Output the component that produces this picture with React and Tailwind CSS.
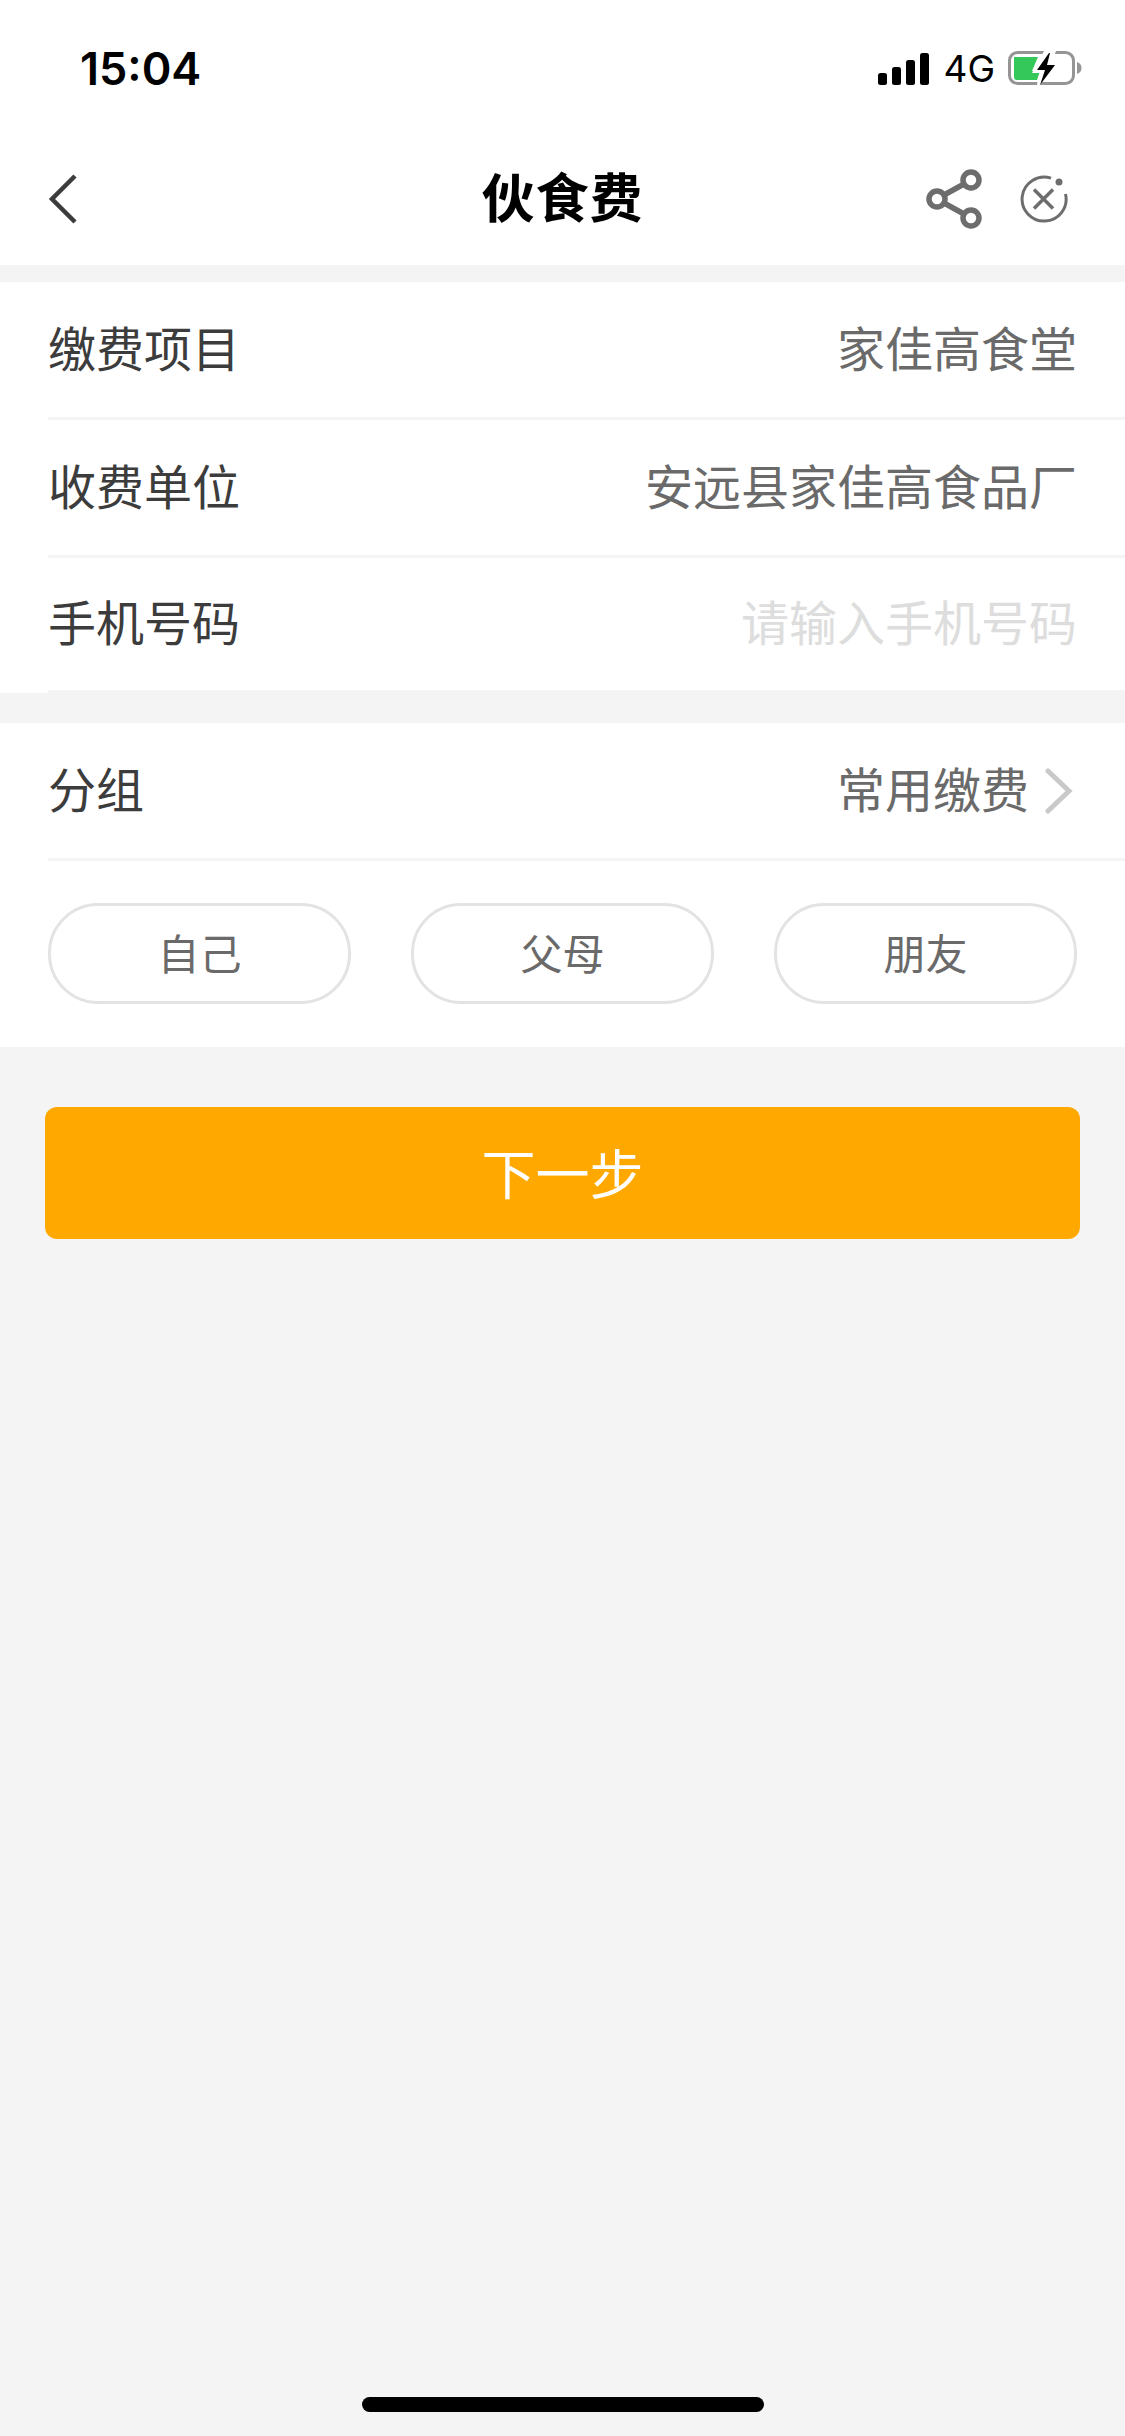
import React from 'react';

const rows = [
  { label: '缴费项目', value: '家佳高食堂', valueClass: 'text-[#6a6a6a]', height: 'h-[138px]' },
  { label: '收费单位', value: '安远县家佳高食品厂', valueClass: 'text-[#6a6a6a]', height: 'h-[138px]' },
  { label: '手机号码', value: '请输入手机号码', valueClass: 'text-[#ddd]', height: 'h-[135px]' },
];

const SignalIcon = () => (
  <svg width="52" height="32" viewBox="0 0 52 32" fill="#000">
    <rect x="0" y="20" width="9" height="12" rx="2.5" />
    <rect x="14" y="14" width="9" height="18" rx="2.5" />
    <rect x="28" y="7" width="9" height="25" rx="2.5" />
    <rect x="42" y="0" width="9" height="32" rx="2.5" />
  </svg>
);

const BatteryIcon = () => (
  <svg width="74" height="36" viewBox="0 0 74 36">
    <rect x="1.5" y="1.5" width="64" height="31" rx="8" fill="none" stroke="#959595" strokeWidth="3" />
    <path d="M6 6h24L24 20h8l-3 9H9a3 3 0 0 1-3-3z" fill="#34c759" />
    <path d="M69 11c3 1 4.500 3 4.500 6s-1.500 5-4.500 6z" fill="#959595" />
    <path d="M36 0h12l-4 11h8L30 36l-1-3 3-11h-8z" fill="#fff" />
    <path d="M41 2 29 19h8l-5 15 15-20h-8l3-12z" fill="#000" />
  </svg>
);

const ShareIcon = () => (
  <svg width="56" height="60" viewBox="0 0 56 60" fill="none" stroke="#6d6d6d" strokeWidth="5.500">
    <circle cx="45" cy="11" r="8" />
    <circle cx="11" cy="30" r="8" />
    <circle cx="45" cy="49" r="8" />
    <path d="M18 26 38 15M18 34l20 11" />
  </svg>
);

const CloseIcon = () => (
  <svg width="48" height="48" viewBox="0 0 48 48" fill="none" stroke="#6d6d6d" strokeWidth="3">
    <path d="M31 3.200A22 22 0 1 0 45.500 19" />
    <path d="M14 14.500l19 19M33 14.500l-19 19" strokeWidth="3.500" />
    <circle cx="39" cy="7" r="3.500" fill="#6d6d6d" stroke="none" />
  </svg>
);

export default function App() {
  return (
    <div className="flex h-[2436px] w-[1125px] flex-col bg-[#f4f4f4] font-['Noto_Sans_CJK_SC','Noto_Sans',sans-serif] overflow-hidden">
      {/* status bar */}
      <div className="flex h-[132px] items-start justify-between bg-white pl-[80px] pr-[43px] pt-[42px]">
        <span className="font-['Inter',sans-serif] text-[45px] leading-[54px] font-semibold text-black">15:04</span>
        <div className="flex items-center pt-[9px]">
          <SignalIcon />
          <span className="ml-[13px] font-['Inter',sans-serif] text-[37px] leading-[36px] text-black">4G</span>
          <div className="ml-[13px]">
            <BatteryIcon />
          </div>
        </div>
      </div>

      {/* nav */}
      <div className="grid h-[133px] grid-cols-[1fr_auto_1fr] items-center bg-white">
        <div className="pl-[48px]">
          <svg width="30" height="50" viewBox="0 0 30 50" fill="none" stroke="#3c3c3c" strokeWidth="4.500">
            <path d="M27 2 4 25l23 23" />
          </svg>
        </div>
        <span className="pb-[6px] text-[53px] leading-none font-semibold tracking-[1px] text-black">伙食费</span>
        <div className="flex items-center justify-end gap-[38px] pr-[57px]">
          <ShareIcon />
          <CloseIcon />
        </div>
      </div>

      <div className="mt-[17px] bg-white">
        {rows.map((row) => (
          <div key={row.label} className="pl-[48px]">
            <div className={`flex items-center justify-between border-b-[3px] border-[#f4f4f4] pr-[48px] pb-[8px] ${row.height}`}>
              <span className="text-[48px] leading-none text-[#3c3c3c]">{row.label}</span>
              <span className={`text-[48px] leading-none ${row.valueClass}`}>{row.value}</span>
            </div>
          </div>
        ))}
      </div>

      <div className="mt-[30px] bg-white">
        <div className="pl-[48px]">
          <div className="flex h-[138px] items-center justify-between border-b-[3px] border-[#f4f4f4] pr-[52px]">
            <span className="pb-[8px] text-[48px] leading-none text-[#3c3c3c]">分组</span>
            <div className="flex items-center gap-[16px]">
              <span className="pb-[8px] text-[48px] leading-none text-[#6a6a6a]">常用缴费</span>
              <svg width="28" height="46" viewBox="0 0 28 46" fill="none" stroke="#c9c9c9" strokeWidth="5" strokeLinecap="round">
                <path d="M3 3l21 20L3 43" />
              </svg>
            </div>
          </div>
        </div>
        <div className="flex justify-between px-[48px] pt-[42px] pb-[43px]">
          {['自己', '父母', '朋友'].map((name) => (
            <div key={name} className="flex h-[101px] w-[303px] items-center justify-center rounded-[50px] border-[3px] border-[#e3e3e3] pb-[3px] text-[42px] leading-none text-[#6a6a6a]">
              {name}
            </div>
          ))}
        </div>
      </div>

      <button className="mx-[45px] mt-[60px] flex h-[132px] items-center justify-center rounded-[12px] bg-[#ffa800] pb-[3px] text-[54px] leading-none text-white">
        下一步
      </button>

      <div className="mt-auto mb-[24px] flex justify-center">
        <div className="h-[15px] w-[402px] rounded-full bg-black" />
      </div>
    </div>
  );
}
